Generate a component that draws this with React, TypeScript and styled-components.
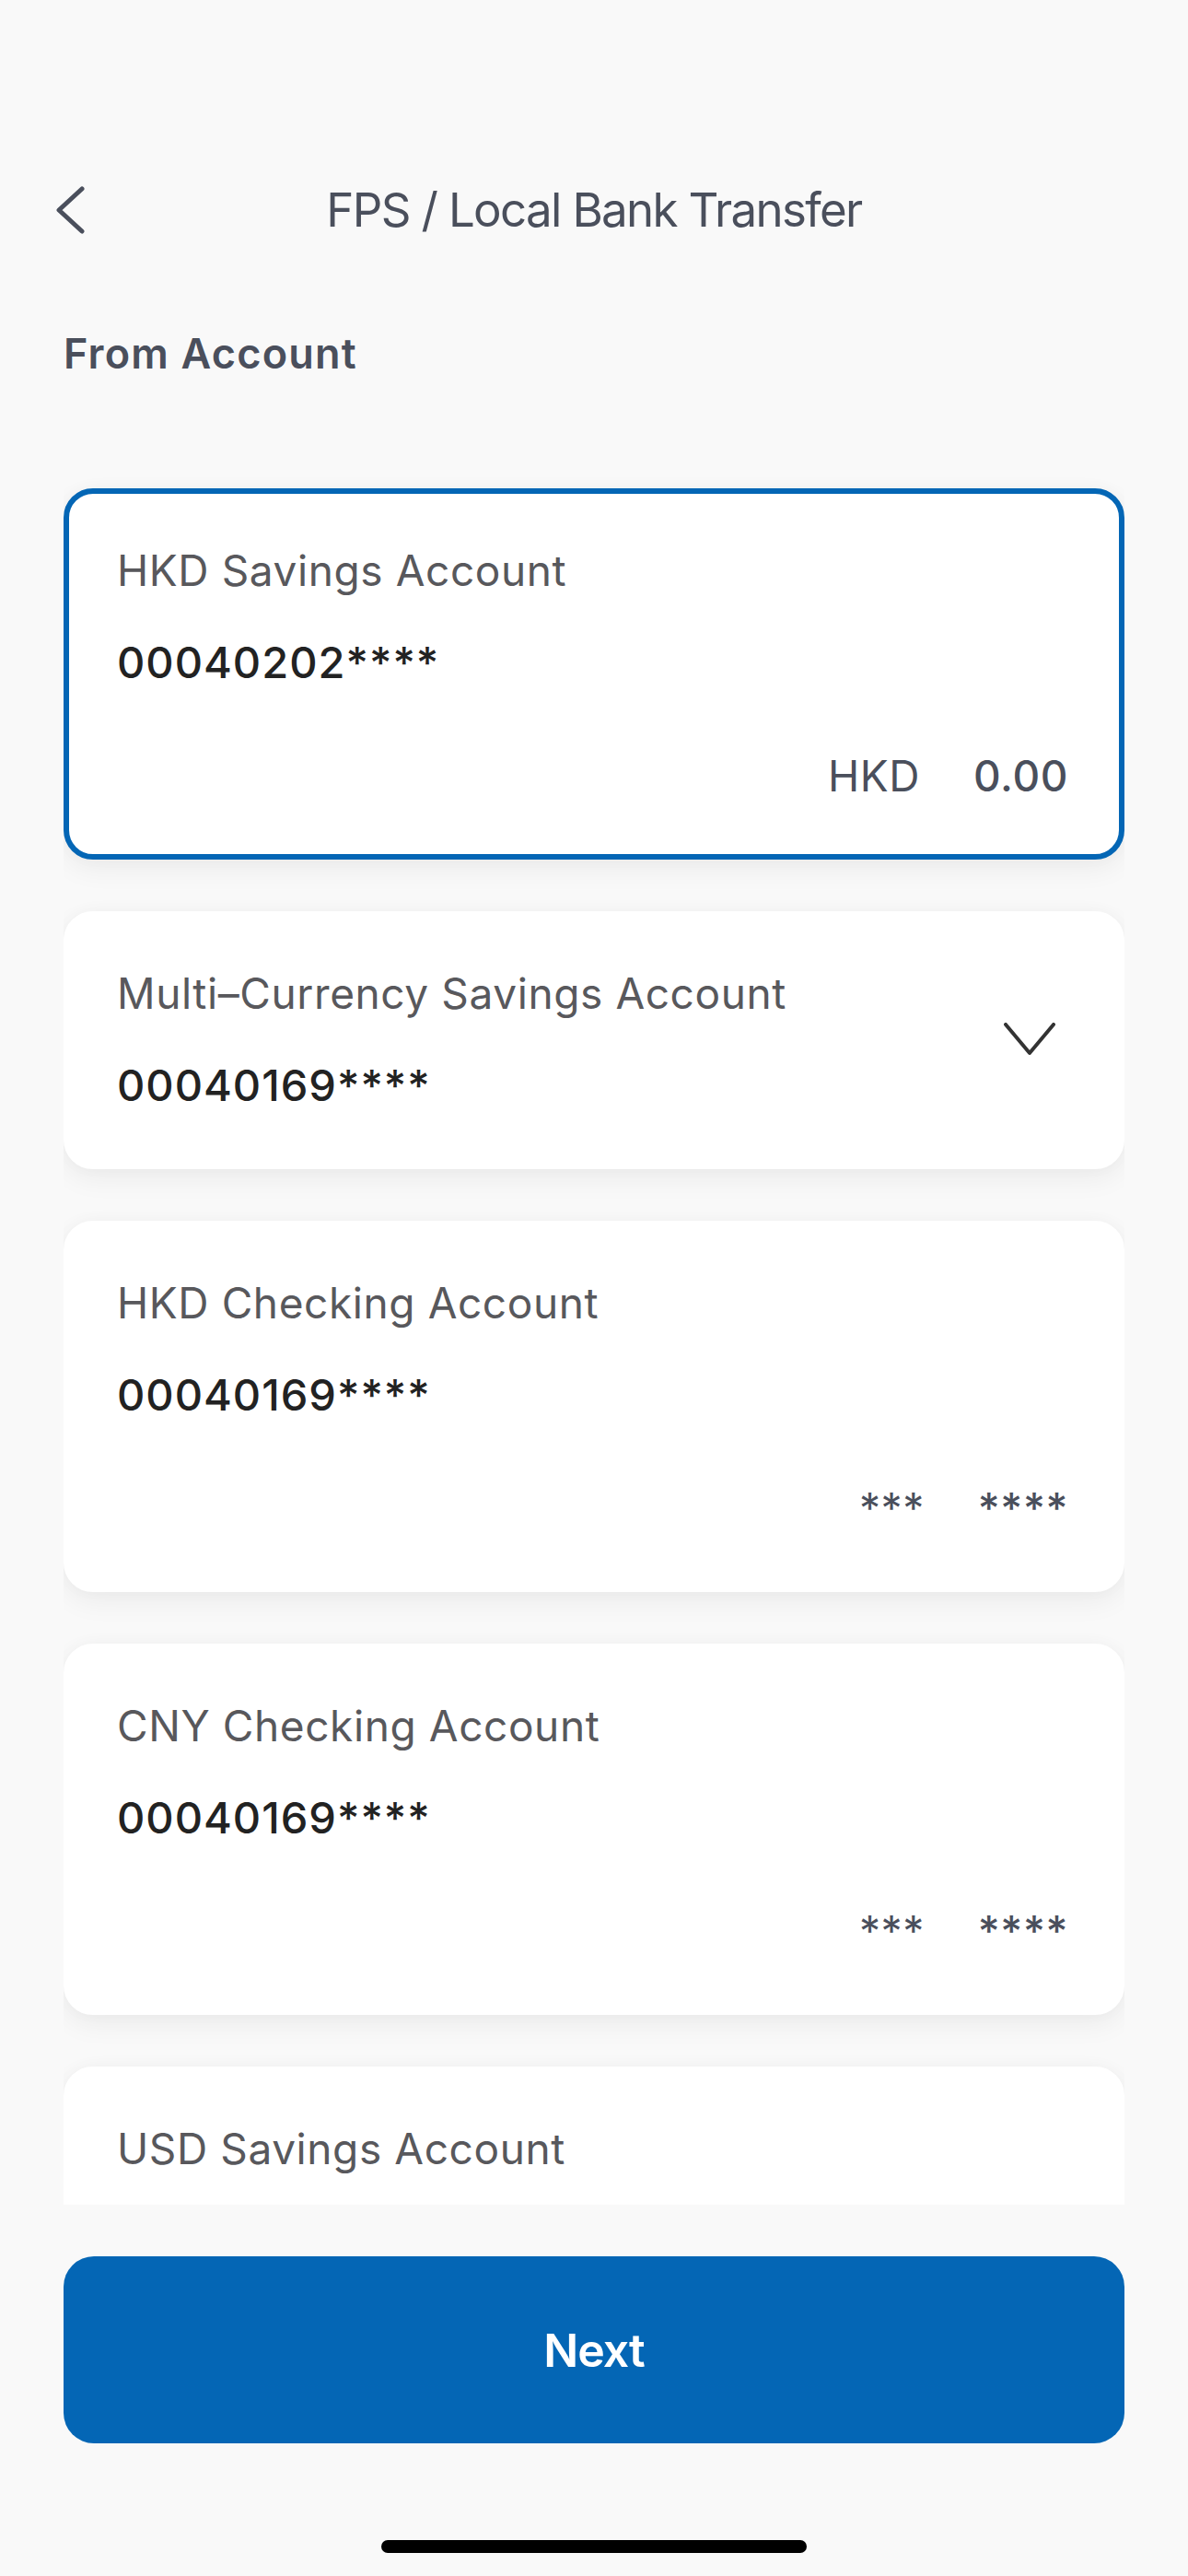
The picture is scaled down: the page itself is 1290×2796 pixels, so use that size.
import React from "react";
import styled, { createGlobalStyle } from "styled-components";

interface IAccount {
  name: string;
  number: string;
  currency?: string;
  balance?: string;
  selected?: boolean;
  expandable?: boolean;
}

const accounts: IAccount[] = [
  { name: "HKD Savings Account", number: "00040202****", currency: "HKD", balance: "0.00", selected: true },
  { name: "Multi–Currency Savings Account", number: "00040169****", expandable: true },
  { name: "HKD Checking Account", number: "00040169****", currency: "***", balance: "****" },
  { name: "CNY Checking Account", number: "00040169****", currency: "***", balance: "****" },
  { name: "USD Savings Account", number: "00040169****", currency: "***", balance: "****" },
];

export default function App() {
  return (
    <>
      <GlobalStyle />
      <Page>
        <Header>
          <BackBtn aria-label="back">
            <svg width="34" height="52" viewBox="0 0 34 52">
              <polyline points="31,3 6,26 31,49" fill="none" stroke="#4a4f5c" strokeWidth="5" strokeLinecap="round" strokeLinejoin="round" />
            </svg>
          </BackBtn>
          <Title>FPS / Local Bank Transfer</Title>
          <span />
        </Header>
        <Body>
          <SectionLabel>From Account</SectionLabel>
          <AccountList>
            {accounts.map((acc, i) => (
              <AccountCard key={i} $selected={!!acc.selected}>
                <CardMain>
                  <AccountName>{acc.name}</AccountName>
                  <AccountNo>{acc.number}</AccountNo>
                  {acc.currency && (
                    <BalanceRow>
                      <Currency>{acc.currency}</Currency>
                      <Amount>{acc.balance}</Amount>
                    </BalanceRow>
                  )}
                </CardMain>
                {acc.expandable && (
                  <ExpandIcon width="56" height="36" viewBox="0 0 56 36">
                    <polyline points="2,2 28,33 54,2" fill="none" stroke="#333333" strokeWidth="4" strokeLinecap="round" strokeLinejoin="round" />
                  </ExpandIcon>
                )}
              </AccountCard>
            ))}
          </AccountList>
          <NextBtn type="button">Next</NextBtn>
        </Body>
        <Footer>
          <HomeIndicator />
        </Footer>
      </Page>
    </>
  );
}

const GlobalStyle = createGlobalStyle`
  html, body {
    margin: 0;
    padding: 0;
    background: #f9f9f9;
  }
  body {
    font-family: Inter, "Liberation Sans", sans-serif;
    -webkit-font-smoothing: antialiased;
  }
  * {
    box-sizing: border-box;
  }
`;

const Page = styled.div`
  min-height: 2796px;
  display: flex;
  flex-direction: column;
  padding-top: 168px;
  background: #f9f9f9;
`;

const Header = styled.div`
  display: grid;
  grid-template-columns: 1fr auto 1fr;
  align-items: center;
  height: 120px;
  padding: 0 58px;
`;

const BackBtn = styled.button`
  display: flex;
  align-items: center;
  justify-self: start;
  padding: 0;
  border: none;
  background: none;
  cursor: pointer;
`;

const Title = styled.h1`
  margin: 0;
  font-size: 51px;
  font-weight: 400;
  line-height: 120px;
  letter-spacing: -1.65px;
  color: #4a4f5c;
`;

const Body = styled.div`
  display: flex;
  flex-direction: column;
  padding: 0 69px;
`;

const SectionLabel = styled.h2`
  margin: 66px 0 0;
  font-size: 45px;
  font-weight: 600;
  line-height: 60px;
  letter-spacing: 1.2px;
  color: #4a4f5c;
`;

const AccountList = styled.div`
  display: flex;
  flex-direction: column;
  gap: 56px;
  height: 1890px;
  margin-top: 89px;
  padding-top: 27px;
  overflow: hidden;
`;

const AccountCard = styled.div<{ $selected: boolean }>`
  flex-shrink: 0;
  display: flex;
  align-items: center;
  padding: 53px 55px 55px 52px;
  background: #ffffff;
  border: 6px solid ${(p) => (p.$selected ? "#0466b5" : "#ffffff")};
  border-radius: 32px;
  box-shadow: 0 10px 30px rgba(0, 0, 0, 0.06), 0 0 18px rgba(0, 0, 0, 0.025);
`;

const CardMain = styled.div`
  flex: 1;
  display: flex;
  flex-direction: column;
`;

const AccountName = styled.div`
  font-size: 46px;
  line-height: 60px;
  letter-spacing: 0.6px;
  color: #58585c;
`;

const AccountNo = styled.div`
  margin-top: 40px;
  font-size: 47px;
  font-weight: 500;
  line-height: 60px;
  letter-spacing: 1px;
  color: #222222;
`;

const BalanceRow = styled.div`
  display: flex;
  justify-content: flex-end;
  align-items: baseline;
  gap: 58px;
  margin-top: 63px;
  font-size: 46px;
  line-height: 60px;
  letter-spacing: 0.6px;
  color: #4a4f5c;
`;

const Currency = styled.span`
  font-weight: 400;
`;

const Amount = styled.span`
  font-weight: 500;
`;

const ExpandIcon = styled.svg`
  flex-shrink: 0;
  margin-right: 14px;
`;

const NextBtn = styled.button`
  height: 203px;
  margin-top: 56px;
  border: none;
  border-radius: 33px;
  background: #0466b5;
  color: #ffffff;
  font-family: Inter, "Liberation Sans", sans-serif;
  font-size: 50px;
  font-weight: 600;
  letter-spacing: -1px;
  cursor: pointer;
`;

const Footer = styled.div`
  flex: 1;
  display: flex;
  justify-content: center;
  align-items: flex-end;
  padding-bottom: 25px;
`;

const HomeIndicator = styled.div`
  width: 462px;
  height: 14px;
  border-radius: 7px;
  background: #000000;
`;
